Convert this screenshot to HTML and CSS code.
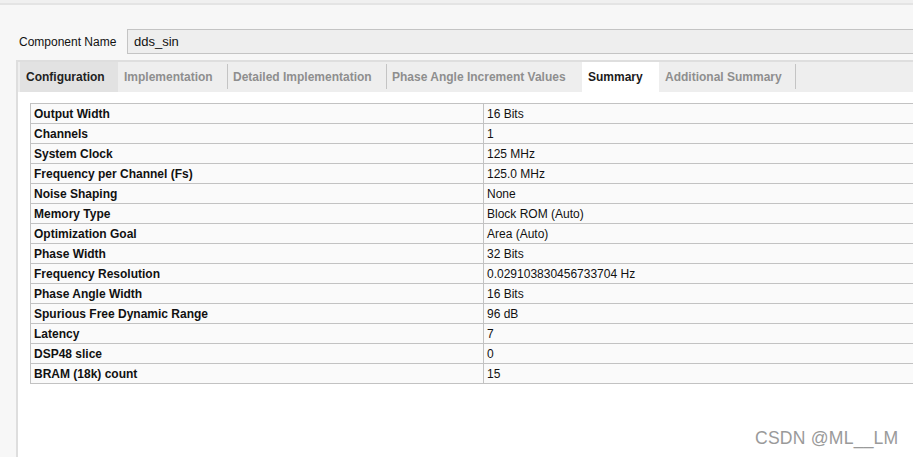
FILE: index.html
```html
<!DOCTYPE html>
<html>
    <head>
        <meta charset="utf-8">
        <title>DDS Compiler - Summary</title>
        <link rel="stylesheet" href="styles.css">
    </head>
    <body>
        <div class="topbar"></div>

        <div class="name-row">
            <span class="name-label">Component Name</span>
            <div class="name-input">dds_sin</div>
        </div>

        <div class="panel">
            <div class="tabs">
                <div class="tab tab-config">Configuration</div>
                <div class="tab tab-impl">Implementation</div>
                <div class="tab tab-detail">Detailed Implementation</div>
                <div class="tab tab-phase">Phase Angle Increment Values</div>
                <div class="tab tab-summary">Summary</div>
                <div class="tab tab-add">Additional Summary</div>
            </div>

            <div class="content">
                <table class="summary">
                    <tr><th>Output Width</th><td>16 Bits</td></tr>
                    <tr><th>Channels</th><td>1</td></tr>
                    <tr><th>System Clock</th><td>125 MHz</td></tr>
                    <tr><th>Frequency per Channel (Fs)</th><td>125.0 MHz</td></tr>
                    <tr><th>Noise Shaping</th><td>None</td></tr>
                    <tr><th>Memory Type</th><td>Block ROM (Auto)</td></tr>
                    <tr><th>Optimization Goal</th><td>Area (Auto)</td></tr>
                    <tr><th>Phase Width</th><td>32 Bits</td></tr>
                    <tr><th>Frequency Resolution</th><td>0.029103830456733704 Hz</td></tr>
                    <tr><th>Phase Angle Width</th><td>16 Bits</td></tr>
                    <tr><th>Spurious Free Dynamic Range</th><td>96 dB</td></tr>
                    <tr><th>Latency</th><td>7</td></tr>
                    <tr><th>DSP48 slice</th><td>0</td></tr>
                    <tr><th>BRAM (18k) count</th><td>15</td></tr>
                </table>
            </div>
        </div>

        <div class="watermark">CSDN @ML__LM</div>
    </body>
</html>
```

FILE: styles.css
```css
html, body {
    margin: 0;
    height: 100%;
    overflow: hidden;
}
body {
    background-color: #f7f7f7;
    font-family: "Liberation Sans", Arial, sans-serif;
    font-size: 12px;
    color: #111;
    display: flex;
    flex-direction: column;
}
.topbar {
    height: 3px;
    background-color: #f0f0f0;
    border-bottom: 2px solid #e4e4e4;
}
.name-row {
    display: flex;
    align-items: center;
    margin-top: 24px;
    padding-left: 19px;
}
.name-label {
    width: 108px;
    font-size: 12px;
    color: #111;
}
.name-input {
    flex: 1;
    height: 23px;
    line-height: 23px;
    margin-right: -10px;
    padding-left: 6px;
    background-color: #eeeeee;
    border: 1px solid #c4c4c4;
    font-size: 13px;
}
.panel {
    flex: 1;
    margin-top: 6px;
    margin-left: 16px;
    border-top: 2px solid #dedede;
    border-left: 2px solid #dedede;
    background-color: #ffffff;
    display: flex;
    flex-direction: column;
}
.tabs {
    display: flex;
    height: 30px;
    padding-left: 2px;
    background-color: #eeeeee;
}
.tab {
    box-sizing: border-box;
    height: 30px;
    line-height: 31px;
    padding-left: 6px;
    font-weight: bold;
    color: #8e8e8e;
    white-space: nowrap;
    position: relative;
}
.tab-config {
    width: 98px;
    background-color: #e2e2e2;
    color: #222;
}
.tab-impl { width: 109px; }
.tab-detail { width: 159px; }
.tab-phase { width: 196px; }
.tab-summary {
    width: 77px;
    background-color: #ffffff;
    color: #1b1b1b;
}
.tab-add { width: 136px; }
.tab-impl::after, .tab-detail::after, .tab-phase::after, .tab-add::after {
    content: "";
    position: absolute;
    right: -1px;
    top: 2px;
    bottom: 3px;
    width: 1px;
    background-color: #c4c4c4;
}
.content {
    flex: 1;
    padding: 11px 0 0 12px;
    overflow: hidden;
}
.summary {
    border-collapse: collapse;
    width: 1000px;
    background-color: #fafafa;
}
.summary th,
.summary td {
    border: 1px solid #c2c2c2;
    padding: 1px 0 0 3px;
    text-align: left;
    height: 18px;
    line-height: 18px;
    white-space: nowrap;
}
.summary th {
    width: 449px;
    font-weight: bold;
    color: #111;
}
.summary td {
    font-weight: normal;
    color: #111;
}
.watermark {
    position: absolute;
    left: 755px;
    top: 428px;
    font-size: 17.6px;
    color: #9a9a9a;
    letter-spacing: 0.2px;
}
```
